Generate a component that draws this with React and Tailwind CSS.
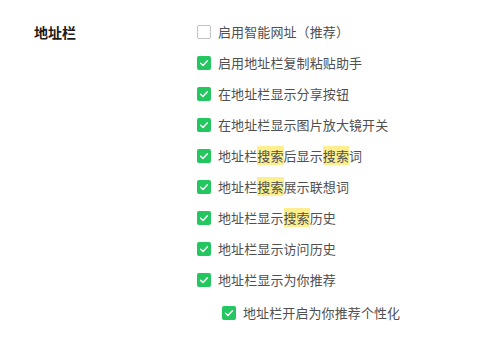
const items = [
  { parts: ["启用智能网址（推荐）"], checked: false },
  { parts: ["启用地址栏复制粘贴助手"], checked: true },
  { parts: ["在地址栏显示分享按钮"], checked: true },
  { parts: ["在地址栏显示图片放大镜开关"], checked: true },
  { parts: ["地址栏", { hl: "搜索" }, "后显示", { hl: "搜索" }, "词"], checked: true },
  { parts: ["地址栏", { hl: "搜索" }, "展示联想词"], checked: true },
  { parts: ["地址栏显示", { hl: "搜索" }, "历史"], checked: true },
  { parts: ["地址栏显示访问历史"], checked: true },
  { parts: ["地址栏显示为你推荐"], checked: true },
];

function Box({ checked }) {
  if (!checked) {
    return <span className="w-[14px] h-[14px] shrink-0 rounded-[2px] border border-[#c4c4c4] bg-white" />;
  }
  return (
    <span className="w-[14px] h-[14px] shrink-0 rounded-[2px] bg-[#23c65f] flex items-center justify-center">
      <svg width="10" height="10" viewBox="0 0 10 10" fill="none">
        <path d="M1.6 5.2 L4 7.4 L8.4 2.8" stroke="white" strokeWidth="1.4" strokeLinecap="round" strokeLinejoin="round" />
      </svg>
    </span>
  );
}

function Row({ item, indent }) {
  return (
    <label className={`flex items-center gap-[7px] h-[31px] ${indent ? "pl-[25px] mt-[2px]" : ""}`}>
      <Box checked={item.checked} />
      <span className="text-[13px] text-[#505050] leading-none tracking-[0.1px]">
        {item.parts.map((p, i) =>
          typeof p === "string" ? (
            <span key={i}>{p}</span>
          ) : (
            <span key={i} className="bg-[#fdee8e]">{p.hl}</span>
          )
        )}
      </span>
    </label>
  );
}

export default function App() {
  return (
    <div
      className="w-[487px] h-[342px] bg-white flex pt-[16px]"
      style={{ fontFamily: '"Noto Sans CJK SC", "Noto Sans", sans-serif' }}
    >
      <div className="w-[197px] pl-[34px] h-[31px] flex items-center">
        <span className="text-[14px] font-bold text-[#1a1a1a] leading-none">地址栏</span>
      </div>
      <div className="flex flex-col">
        {items.map((it, i) => (
          <Row key={i} item={it} />
        ))}
        <Row item={{ parts: ["地址栏开启为你推荐个性化"], checked: true }} indent />
      </div>
    </div>
  );
}
